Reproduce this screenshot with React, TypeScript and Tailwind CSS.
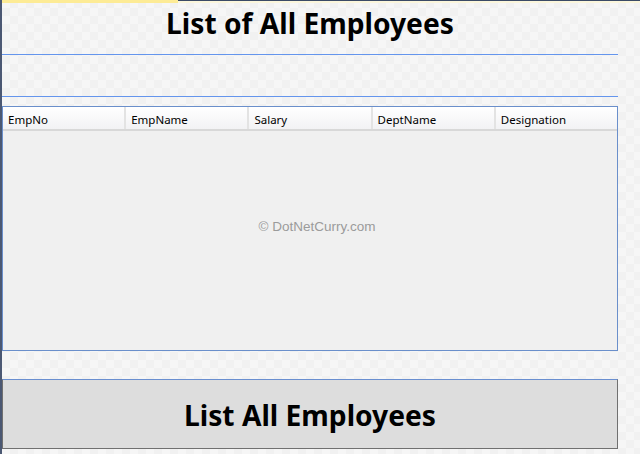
import React from "react";

const columns = ["EmpNo", "EmpName", "Salary", "DeptName", "Designation"];

export default function App() {
  return (
    <div className="w-[640px] h-[454px] overflow-hidden flex flex-col border-l-2 border-[#4b5873] bg-[conic-gradient(#f1f1f1_25%,#f6f6f6_0_50%,#f1f1f1_0_75%,#f6f6f6_0)] bg-size-[16px_16px] font-['Noto_Sans',sans-serif] text-black">
      {/* top strip */}
      <div className="flex h-[3px] -ml-[2px]">
        <div className="w-[178px] bg-[#fdeb95]" />
        <div className="flex-1 border-t border-[#3b4a66] bg-[#fbf6dc]" />
      </div>

      <div className="w-[616px] flex flex-col">
        <h1 className="h-[51px] flex items-center justify-center text-[28.2px] font-bold leading-none pb-[11px]">
          List of All Employees
        </h1>
        <div className="h-px bg-[#6495ed]" />
        <div className="h-[41px]" />
        <div className="h-px bg-[#6495ed]" />
        <div className="h-[9px]" />

        {/* grid */}
        <div className="h-[245px] border border-[#6a8fcb] bg-[#f0f0f0] flex flex-col">
          <div className="h-[24px] flex bg-gradient-to-b from-white to-[#f2f2f4] border-b-2 border-[#d8d8d8]">
            {columns.map((c) => (
              <div
                key={c}
                className="flex-1 flex items-center pl-[5px] pt-[4px] text-[11.5px] border-r-2 border-[#e3e3e3] last:border-r-0"
              >
                {c}
              </div>
            ))}
          </div>
          <div className="flex-1 flex items-center justify-center pb-[26px] pl-[14px]">
            <span className="font-['Liberation_Sans',Arial,sans-serif] text-[13.5px] text-[#9b9b9b]">
              © DotNetCurry.com
            </span>
          </div>
        </div>

        <div className="h-[28px]" />

        <button className="h-[70px] bg-[#dddddd] border border-[#707070] border-t-[#6a8fd0] flex items-center justify-center text-[28.2px] font-bold leading-none pt-[2px]">
          List All Employees
        </button>
      </div>
    </div>
  );
}
